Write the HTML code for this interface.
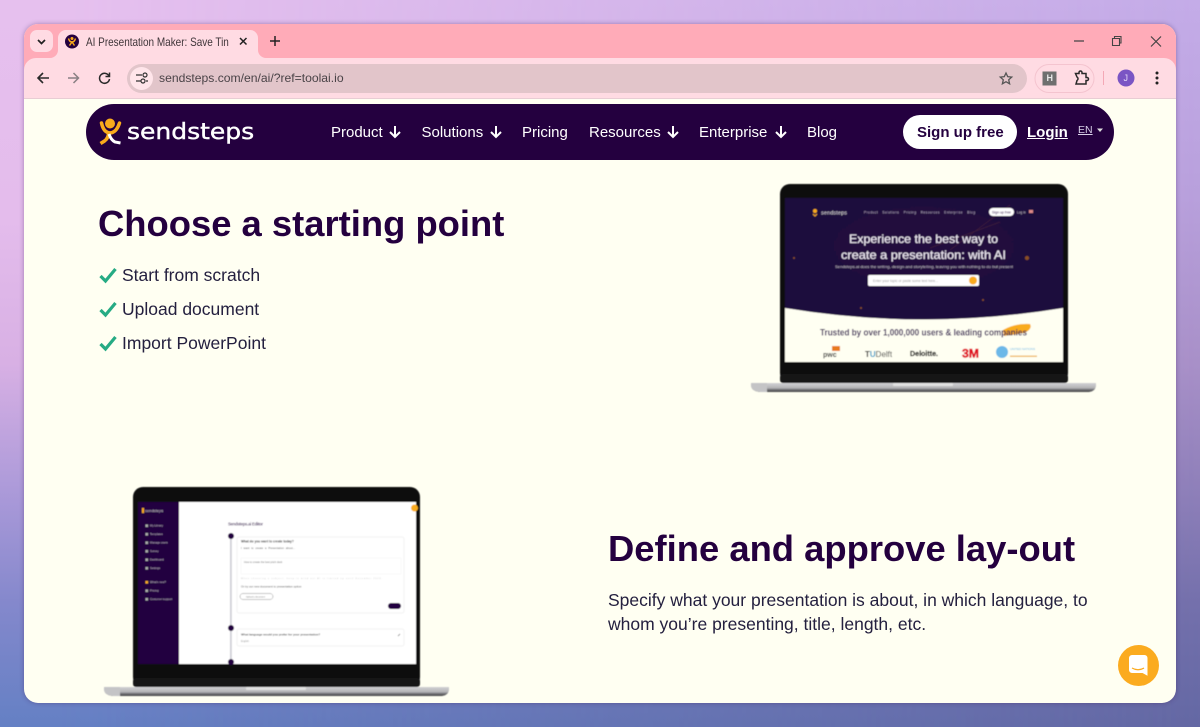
<!DOCTYPE html>
<html><head><meta charset="utf-8"><style>
*{box-sizing:border-box}
html,body{margin:0;width:1200px;height:727px;overflow:hidden}
body{position:relative;font-family:"Liberation Sans",sans-serif;background:linear-gradient(180deg,#c4ace8 0,#b8a0dc 27%,#a890c8 50%,#8c7eb8 69%,#7470ac 83%,#6468a4 100%)}
.bgr{position:absolute;inset:0;background:linear-gradient(180deg,#e6c0ee 0,#e4bcec 30%,#d8b0e4 50%,#a898d8 69%,#8488cc 83%,#6480c4 100%);-webkit-mask-image:linear-gradient(90deg,#000 0,#000 5%,transparent 100%);mask-image:linear-gradient(90deg,#000 0,#000 5%,transparent 100%)}
.a{position:absolute;white-space:nowrap}
#win{position:absolute;left:24px;top:24px;width:1152px;height:679px;border-radius:14px;overflow:hidden;background:#fffff2;box-shadow:0 0 5px rgba(60,30,90,.4)}
.nav{font-size:15px;color:#fff;top:124px;line-height:18px}
h1,h2{margin:0;font-weight:700;color:#24003f;position:absolute;white-space:nowrap;font-size:36.4px;line-height:44px}
.li{font-size:17.500px;color:#24203f;left:122px;line-height:22px}
</style></head><body>
<div class="bgr"></div>
<div id="win"></div>
<svg class="a" style="left:0;top:0" width="1200" height="727" viewBox="0 0 1200 727">
<defs><clipPath id="w"><rect x="24" y="24" width="1152" height="679" rx="14"/></clipPath>
<filter id="b" x="-5%" y="-5%" width="110%" height="110%"><feGaussianBlur stdDeviation=".4"/></filter>
<linearGradient id="base" x1="0" y1="0" x2="0" y2="1"><stop offset="0" stop-color="#d2d2d4"/><stop offset=".55" stop-color="#b4b4b6"/><stop offset=".75" stop-color="#707074"/><stop offset="1" stop-color="#444"/></linearGradient>
<radialGradient id="hero" cx=".5" cy=".4" r=".7"><stop offset="0" stop-color="#23083f"/><stop offset="1" stop-color="#1c0a3c"/></radialGradient>
</defs>
<g clip-path="url(#w)">
<rect x="24" y="24" width="1152" height="34" fill="#ffabb8"/>
<rect x="24" y="58" width="1152" height="41" fill="#ffdbe3"/>
<path d="M24 70a12 12 0 0 1 12-12H1164a12 12 0 0 1 12 12V58H24z" fill="#ffabb8"/>
<rect x="24" y="98" width="1152" height="1" fill="#e8cdd4"/>
<path d="M50 58h0a8 8 0 0 0 8-8V38a8 8 0 0 1 8-8h184a8 8 0 0 1 8 8v12a8 8 0 0 0 8 8v1H50z" fill="#ffdbe3"/>
<rect x="30" y="30" width="23" height="22" rx="7" fill="#ffdbe3"/>
<path d="M38 40l3.500 3.500L45 40" fill="none" stroke="#222" stroke-width="1.700"/>
<circle cx="72" cy="41.500" r="7" fill="#24003f"/>
<circle cx="72" cy="38.500" r="1.500" fill="#f9ab1c"/>
<path d="M68.500 38.500q1 3.500 3.500 3.500t3.500-3.500M72 42l-2.500 3.500M72 42l2.500 3.500" stroke="#f9ab1c" stroke-width="1.400" fill="none"/>
<path d="M240 38l6.500 6.500M246.500 38l-6.500 6.500" stroke="#222" stroke-width="1.500"/>
<path d="M270 41h10M275 36v10" stroke="#222" stroke-width="1.500"/>
<path d="M1074 41h10" stroke="#444" stroke-width="1.200"/>
<path d="M1112.500 38.500h7v7h-7zM1114.500 38v-1.500h6.500v6.500h-1.500" fill="none" stroke="#444" stroke-width="1.100"/>
<path d="M1151 36.500l10 10M1161 36.500l-10 10" stroke="#444" stroke-width="1.200"/>
<path d="M49 78H38M43 73l-5 5 5 5" fill="none" stroke="#2a2a2a" stroke-width="1.600"/>
<path d="M68 78h10M73.500 73l5 5-5 5" fill="none" stroke="#8a8084" stroke-width="1.500"/>
<path d="M109 76a5 5 0 1 0 .5 3M109.500 72.500v4h-4" fill="none" stroke="#2a2a2a" stroke-width="1.500"/>
<rect x="127" y="64" width="900" height="29" rx="14.500" fill="#e2c5ca"/>
<circle cx="141.500" cy="78.500" r="11.500" fill="#ffe5ea"/>
<path d="M136 75h6M146 81h2M136 81h5" stroke="#333" stroke-width="1.300"/><circle cx="145" cy="75" r="2" fill="none" stroke="#333" stroke-width="1.200"/><circle cx="143" cy="81" r="2" fill="none" stroke="#333" stroke-width="1.200"/>
<path d="M1006 73l1.700 3.700 4 .4-3 2.700.9 4-3.600-2.100-3.600 2.100.9-4-3-2.700 4-.4z" fill="none" stroke="#555" stroke-width="1.300"/>
<rect x="1035" y="64.500" width="59" height="28" rx="14" fill="none" stroke="#f4c4cf"/>
<rect x="1042.500" y="71.500" width="14" height="14" fill="#6f6f6f"/>
<path d="M1075.500 73.500h3.500v-1a1.500 1.500 0 0 1 3 0v1h4v4h1a1.500 1.500 0 0 1 0 3h-1v3.500h-10l1-3.500v0a2 2 0 0 0 0-3.500z" fill="none" stroke="#2a2a2a" stroke-width="1.500"/>
<rect x="1103" y="71" width="1" height="14" fill="#f4a8b6"/>
<circle cx="1126" cy="78" r="8.500" fill="#7a55c4"/>
<circle cx="1157" cy="73" r="1.500" fill="#222"/><circle cx="1157" cy="78" r="1.500" fill="#222"/><circle cx="1157" cy="83" r="1.500" fill="#222"/>
</g>
<rect x="86" y="104" width="1028" height="56" rx="28" fill="#24003f"/>
<circle cx="110" cy="123.500" r="5" fill="#f9ab1c"/>
<path d="M101.500 123q2 9.500 8.500 10 6.500-.5 9.500-10" fill="none" stroke="#f9ab1c" stroke-width="3.500" stroke-linecap="round"/>
<path d="M108.500 133q0 5-4 8l-4 2.500" fill="none" stroke="#f9ab1c" stroke-width="3.500"/>
<path d="M109 134q2 6 6 8l5.500 1" fill="none" stroke="#fff" stroke-width="3"/>
<rect x="903" y="115" width="114" height="34" rx="17" fill="#fff"/>
<path d="M395 126v11M390 132l5 5 5-5M496 126v11M491 132l5 5 5-5M673 126v11M668 132l5 5 5-5M781 126v11M776 132l5 5 5-5" fill="none" stroke="#fff" stroke-width="2"/>
<path d="M1097 128.500h6l-3 3.500z" fill="#ddd"/>
<path d="M100.500 276l5 5 10-12" fill="none" stroke="#26ab84" stroke-width="3.200"/>
<path d="M100.500 310l5 5 10-12" fill="none" stroke="#26ab84" stroke-width="3.200"/>
<path d="M100.500 344l5 5 10-12" fill="none" stroke="#26ab84" stroke-width="3.200"/>

<!-- laptop 1 -->
<g filter="url(#b)">
<path d="M751 383h345v2q0 6-7 7H760q-9-1-9-7z" fill="url(#base)"/>
<path d="M751 383h16v9h-7q-9-1-9-7z" fill="#c4c4c6"/>
<rect x="893" y="383" width="60" height="3" rx="1" fill="#e2e2e2"/>
<rect x="780" y="184" width="288" height="199" rx="10" fill="#0a0a0c"/>
<rect x="780" y="374" width="288" height="9" rx="3" fill="#141416"/>
<rect x="785" y="198" width="278" height="164" fill="#fffff2"/>
<path d="M785 198h278v110q-139 23-278 0z" fill="url(#hero)"/>
<path d="M1010 205l-60 45M1000 222l-70 26" stroke="#3a1a3a" stroke-width="1" fill="none"/>
<g fill="#8a5020"><circle cx="1027" cy="258" r="2"/><circle cx="861" cy="308" r="1"/><circle cx="983" cy="300" r="1"/><circle cx="794" cy="258" r="1"/></g>
<text x="821" y="214.500" font-size="5.500" fill="#ddd" textLength="26">sendsteps</text>
<circle cx="815" cy="211" r="2" fill="#f9ab1c"/><path d="M813 214l2 2 2-2" stroke="#f9ab1c" fill="none"/>
<text x="864" y="213.500" font-size="3.200" fill="#c4bccc" textLength="111" word-spacing="3">Product Solutions Pricing Resources Enterprise Blog</text>
<rect x="989" y="208" width="25" height="8" rx="4" fill="#fff"/><text x="992" y="213.500" font-size="3.500" fill="#24003f" textLength="19">Sign up free</text>
<text x="1017" y="213.500" font-size="3.200" fill="#ccc">Log in</text><rect x="1029" y="210" width="4" height="3" fill="#d88"/>
<text x="849" y="243" font-size="12" fill="#ece8f0" stroke="#ece8f0" stroke-width=".2" textLength="149" lengthAdjust="spacingAndGlyphs">Experience the best way to</text>
<text x="841" y="259" font-size="12" fill="#ece8f0" stroke="#ece8f0" stroke-width=".2" textLength="165" lengthAdjust="spacingAndGlyphs">create a presentation: with AI</text>
<text x="835" y="268" font-size="3.800" fill="#ccc" textLength="178" lengthAdjust="spacingAndGlyphs">Sendsteps.ai does the writing, design and storytelling, leaving you with nothing to do but present</text>
<rect x="868" y="275" width="111" height="11" rx="1.500" fill="#fff"/><text x="873" y="282" font-size="3.500" fill="#999">Enter your topic or paste some text here...</text><circle cx="973" cy="280.500" r="4" fill="#f9ab1c"/>
<path d="M1003 330q12-7 27-6 3 5-6 9l-20 3z" fill="#f9ab1c"/>
<text x="820" y="335.500" font-size="9.500" font-weight="700" fill="#3a2458" textLength="207" lengthAdjust="spacingAndGlyphs">Trusted by over 1,000,000 users &amp; leading companies</text>
<text x="823" y="357" font-size="7" font-weight="700" fill="#333">pwc</text><rect x="832" y="346" width="8" height="5" fill="#e8791c"/>
<text x="865" y="357" font-size="8" fill="#333"><tspan fill="#111" font-weight="700">T</tspan><tspan fill="#2a9ac8" font-weight="700">U</tspan>Delft</text>
<text x="910" y="356" font-size="7" font-weight="700" fill="#000" stroke="#000" stroke-width=".15" textLength="28" lengthAdjust="spacingAndGlyphs">Deloitte.</text>
<text x="962" y="357.500" font-size="12" font-weight="700" fill="#e01020" stroke="#e01020" stroke-width=".5" textLength="17" lengthAdjust="spacingAndGlyphs">3M</text>
<circle cx="1002" cy="352" r="6" fill="#6cb8e8"/>
<text x="1010" y="350" font-size="3" fill="#6cb8e8">UNITED NATIONS</text>
<rect x="1010" y="355.500" width="27" height="1.500" fill="#f0c070"/>
</g>

<!-- laptop 2 -->
<g filter="url(#b)">
<path d="M104 687h345v2q0 6-7 7H113q-9-1-9-7z" fill="url(#base)"/>
<path d="M104 687h16v9h-7q-9-1-9-7z" fill="#c4c4c6"/>
<rect x="246" y="687" width="60" height="3" rx="1" fill="#e2e2e2"/>
<rect x="133" y="487" width="287" height="200" rx="10" fill="#0a0a0c"/>
<rect x="133" y="678" width="287" height="9" rx="3" fill="#141416"/>
<rect x="138" y="502" width="278" height="162" fill="#fff"/>
<rect x="138" y="502" width="41" height="162" fill="#24003f"/>
<text x="145" y="512" font-size="4" fill="#ccc">sendsteps</text><rect x="142" y="508" width="2" height="5" fill="#f9ab1c"/>
<g fill="#aaa"><rect x="145.500" y="524.500" width="2.500" height="2.500"/><rect x="145.500" y="533" width="2.500" height="2.500"/><rect x="145.500" y="541.500" width="2.500" height="2.500"/><rect x="145.500" y="550" width="2.500" height="2.500"/><rect x="145.500" y="558.500" width="2.500" height="2.500"/><rect x="145.500" y="567" width="2.500" height="2.500"/><rect x="145.500" y="581" width="2.500" height="2.500" fill="#f9ab1c"/><rect x="145.500" y="589.500" width="2.500" height="2.500"/><rect x="145.500" y="598" width="2.500" height="2.500"/></g>
<g font-size="2.800" fill="#ccc"><text x="150" y="526.500">My Library</text><text x="150" y="535">Templates</text><text x="150" y="543.500">Manage users</text><text x="150" y="552">Survey</text><text x="150" y="560.500">Dashboard</text><text x="150" y="569">Settings</text><text x="150" y="583">What's new?</text><text x="150" y="591.500">Pricing</text><text x="150" y="600">Customer support</text></g>
<circle cx="414.500" cy="508" r="3.500" fill="#f9ab1c"/>
<text x="228" y="525.500" font-size="4.200" font-weight="700" fill="#6a5a7a" textLength="35">Sendsteps.ai Editor</text>
<rect x="230" y="535" width="1.800" height="129" fill="#cfcfd6"/>
<circle cx="231" cy="536" r="3" fill="#24003f"/><circle cx="231" cy="628" r="3" fill="#24003f"/><circle cx="231" cy="662" r="3" fill="#24003f"/>
<rect x="237" y="537" width="167" height="76" rx="2" fill="#fff" stroke="#f2f2f2"/>
<text x="241" y="542.500" font-size="3.200" font-weight="700" fill="#444">What do you want to create today?</text>
<text x="241" y="549" font-size="2.800" fill="#666" word-spacing="1">I want to create a Presentation about...</text>
<rect x="241" y="558" width="160" height="16" fill="#fff" stroke="#f4f4f4" stroke-width=".5"/>
<text x="244" y="563" font-size="2.600" fill="#777">How to create the best pitch deck</text>
<text x="241" y="579" font-size="2" fill="#bbb" textLength="141">When choosing a subject, keep in mind our AI is limited up until December 2023.</text>
<text x="241" y="587.500" font-size="2.900" fill="#555">Or try our new document to presentation option</text>
<rect x="240" y="593.500" width="33" height="6" rx="3" fill="#fff" stroke="#888" stroke-width=".5"/><text x="246" y="597.500" font-size="2.200" fill="#666">Upload a document</text>
<rect x="388" y="603" width="13" height="6" rx="3" fill="#24003f"/>
<rect x="237" y="629" width="167" height="17" rx="2" fill="#fff" stroke="#f2f2f2"/>
<text x="241" y="635.500" font-size="3" font-weight="700" fill="#555">What language would you prefer for your presentation?</text>
<text x="241" y="642" font-size="2.400" fill="#999">English</text>
<path d="M398 636l2-2" stroke="#777" stroke-width=".8"/>
</g>

<!-- chat -->
<circle cx="1138.500" cy="665.500" r="20.500" fill="#fbab1f"/>
<path d="M1132 655h12.500a3 3 0 0 1 3 3v17.700l-5-2.700H1132a3 3 0 0 1-3-3V658a3 3 0 0 1 3-3z" fill="#fff"/>
<path d="M1132 668q6 3.500 12 0" fill="none" stroke="#fbab1f" stroke-width="1.200"/>
</svg>

<div class="a" style="left:86px;top:35px;font-size:12px;line-height:14px;color:#3f3539;transform:scaleX(.83);transform-origin:left">AI Presentation Maker: Save Tin</div>
<div class="a" style="left:159px;top:71px;font-size:12.150px;line-height:15px;color:#4a4347">sendsteps.com/en/ai/?ref=toolai.io</div>
<div class="a" style="left:1046.500px;top:73px;font-size:9px;line-height:11px;font-weight:700;color:#e8e8e8">H</div>
<div class="a" style="left:1123.500px;top:73px;font-size:9px;line-height:11px;color:#e4d8f8">J</div>
<div class="a" style="left:127px;top:119px;font-family:'DejaVu Sans',sans-serif;font-size:22px;line-height:28px;color:#fff;-webkit-text-stroke:.4px #fff;transform:scaleX(1.136);transform-origin:left">sendsteps</div>
<div class="a nav" style="left:331px">Product</div>
<div class="a nav" style="left:421.500px">Solutions</div>
<div class="a nav" style="left:522px">Pricing</div>
<div class="a nav" style="left:589px">Resources</div>
<div class="a nav" style="left:699px">Enterprise</div>
<div class="a nav" style="left:807px">Blog</div>
<div class="a" style="left:917px;top:124px;font-size:15px;line-height:18px;font-weight:700;color:#24003f">Sign up free</div>
<div class="a" style="left:1027px;top:124px;font-size:15px;line-height:18px;font-weight:700;color:#fff;text-decoration:underline">Login</div>
<div class="a" style="left:1078px;top:124px;font-size:10.500px;line-height:13px;color:#d8d0e8;text-decoration:underline">EN</div>
<h1 style="left:98px;top:202px">Choose a starting point</h1>
<div class="a li" style="top:264px">Start from scratch</div>
<div class="a li" style="top:298px">Upload document</div>
<div class="a li" style="top:332px">Import PowerPoint</div>
<h2 style="left:608px;top:527px">Define and approve lay-out</h2>
<div class="a" style="left:608px;top:588px;font-size:17.500px;line-height:24px;color:#24203f">Specify what your presentation is about, in which language, to<br>whom you’re presenting, title, length, etc.</div>
</body></html>
